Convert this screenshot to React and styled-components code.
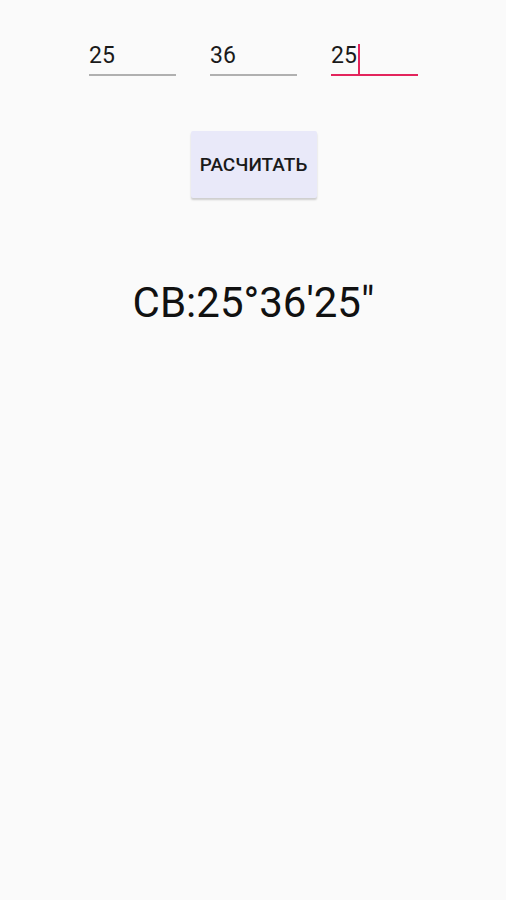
import styled, { createGlobalStyle } from "styled-components";

const GlobalStyle = createGlobalStyle`
  html, body {
    margin: 0;
    padding: 0;
    background: #fafafa;
  }
  body {
    font-family: Roboto, "Noto Sans", sans-serif;
  }
`;

export default function App() {
  const values = ["25", "36", "25"];

  return (
    <>
      <GlobalStyle />
      <Page>
        <Fields>
          {values.map((v, i) => (
            <Field key={i} $active={i === 2}>
              <span>{v}</span>
              {i === 2 && <Cursor />}
            </Field>
          ))}
        </Fields>
        <CalcButton>РАСЧИТАТЬ</CalcButton>
        <Result>СВ:25°36'25"</Result>
      </Page>
    </>
  );
}

const Page = styled.div`
  width: 506px;
  height: 900px;
  display: flex;
  flex-direction: column;
  align-items: center;
  background: #fafafa;
`;

const Fields = styled.div`
  display: flex;
  gap: 34px;
  margin-top: 43px;
  margin-left: 1px;
`;

const Field = styled.div`
  width: 87px;
  height: 33px;
  display: flex;
  align-items: center;
  font-size: 23px;
  color: #1a1a1a;
  border-bottom: 2px solid ${(p) => (p.$active ? "#e3245c" : "#b0b0b0")};
  box-sizing: border-box;
  padding-bottom: 6px;
`;

const Cursor = styled.div`
  width: 2px;
  height: 30px;
  background: #e3245c;
  margin-left: 1px;
  margin-top: 6px;
`;

const CalcButton = styled.button`
  width: 126px;
  height: 67px;
  margin-top: 55px;
  margin-left: 1px;
  border: none;
  border-radius: 2px;
  background: #e9e9f9;
  box-shadow: 0 2px 2px rgba(0, 0, 0, 0.18);
  font-family: Roboto, "Noto Sans", sans-serif;
  font-size: 19px;
  font-weight: 500;
  color: #1a1a1a;
  padding: 0;
`;

const Result = styled.div`
  margin-top: 80px;
  margin-left: 1px;
  font-size: 42px;
  color: #111;
  line-height: 1.2;
`;
